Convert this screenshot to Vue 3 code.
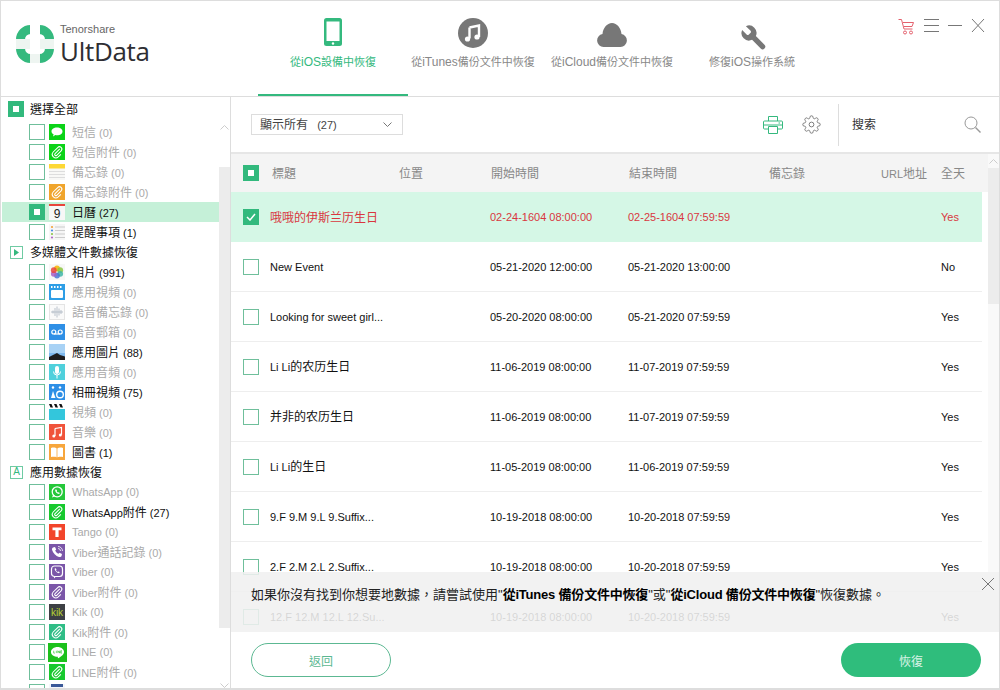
<script setup>
import { h } from 'vue'

// Latin and CJK parts of a label have different sizes in the original, so CJK runs get their own span
const Mixed = (props) =>
  h(
    'span',
    props.text
      .split(/([\u3000-\u9fff]+)/)
      .filter(Boolean)
      .map((part) => (/[\u3000-\u9fff]/.test(part) ? h('span', { class: 'cjk' }, part) : part)),
  )
Mixed.props = ['text']

// Paperclip drawn on a coloured tile, shared by all the "attachment" types
const clip = (bg) => ({
  bg,
  svg: '<path d="M11.6 4.8 6.2 10.2a1.3 1.3 0 0 0 1.9 1.9l5-5a2.7 2.7 0 0 0-3.9-3.8L4.1 8.4a4 4 0 0 0 5.7 5.6l3-3" fill="none" stroke="#fff" stroke-width="1.2" transform="translate(8 8) scale(.88) translate(-8.4 -8.4)"/>',
})

const icons = {
  msg: { bg: '#0bd318', svg: '<path d="M8 3.5c3.2 0 5.5 1.7 5.5 3.9S11.2 11.3 8 11.3c-.6 0-1.100 0-1.600-.2L4 12.600l.6-2.300C3.300 9.600 2.500 8.600 2.500 7.400 2.500 5.200 4.800 3.500 8 3.500z" fill="#fff"/>' },
  msgClip: clip('#0bd318'),
  notes: { bg: '#f8f8f6', svg: '<rect width="16" height="4.500" fill="#fdd835"/><path d="M0 7.500h16M0 10.500h16M0 13.500h16" stroke="#ddd"/>' },
  notesClip: clip('#f0a52c'),
  cal: { bg: '#f7f7f7', svg: '<rect width="16" height="2" fill="#e8453c"/><text x="8" y="14" font-size="12" text-anchor="middle" fill="#222" font-family="Liberation Sans">9</text>' },
  remind: { bg: '#f6f6f6', svg: '<path d="M6 3h10M6 6.500h10M6 10h10M6 13.500h10" stroke="#ccc"/><circle cx="3" cy="3" r="1.100" fill="#f2a33a"/><circle cx="3" cy="6.500" r="1.100" fill="#4a90e2"/><circle cx="3" cy="10" r="1.100" fill="#8bc34a"/><circle cx="3" cy="13.500" r="1.100" fill="#b06ac4"/>' },
  photos: { bg: '#f7f7f7', svg: '<g fill-opacity=".85"><circle cx="8" cy="4.400" r="2.900" fill="#f7b500"/><circle cx="11.200" cy="6.200" r="2.900" fill="#8cc63f"/><circle cx="11.200" cy="9.800" r="2.900" fill="#3fb6a8"/><circle cx="8" cy="11.600" r="2.900" fill="#4a77d4"/><circle cx="4.800" cy="9.800" r="2.900" fill="#a75ec4"/><circle cx="4.800" cy="6.200" r="2.900" fill="#e8453c"/></g>' },
  appVideo: { bg: '#2e9ee6', svg: '<rect x="2" y="6" width="12" height="8" rx="1" fill="#fff"/><path d="M2 3h12" stroke="#fff" stroke-width="2" stroke-dasharray="1.500 1.500"/>' },
  voice: { bg: '#fafafa', svg: '<rect x=".5" y=".5" width="15" height="15" fill="none" stroke="#e4e4e4"/><path d="M2 8h12M4 6.500v3M6 4v8M8 2.500v11M10 4.500v7M12 6v4" stroke="#a9b4c0" stroke-width=".8"/>' },
  voicemail: { bg: '#2e8fe6', svg: '<circle cx="4.800" cy="8" r="2" fill="none" stroke="#fff" stroke-width="1.200"/><circle cx="11.200" cy="8" r="2" fill="none" stroke="#fff" stroke-width="1.200"/><path d="M4.800 10h6.400" stroke="#fff" stroke-width="1.200"/>' },
  appImage: { bg: '#7db8ee', svg: '<rect width="16" height="9" fill="#a8d2f5"/><path d="M0 16v-3l5-2.500 3-1.500 3 2 5 1.500V16z" fill="#1d1d1f"/>' },
  audio: { bg: '#4fd0dc', svg: '<rect x="6" y="2" width="4" height="8" rx="2" fill="#fff"/><path d="M4.500 7.500a3.500 3.500 0 0 0 7 0M8 11v3.500" fill="none" stroke="#fff"/>' },
  album: { bg: '#2e8fe6', svg: '<circle cx="4" cy="3.500" r="1.200" fill="#fff"/><path d="M2 14l2-7 2.500 7z" fill="#fff"/><circle cx="11" cy="10.500" r="3.300" fill="none" stroke="#fff" stroke-width="1.400"/><path d="M9.500 3.500 11 2l1.500 1.500L11 5z" fill="#fff"/>' },
  video: { bg: '#33c6dc', svg: '<rect width="16" height="5" fill="#fff"/><path d="M0 0h2.500l1.500 3.500H1.500zM5 0h2.500L9 3.500H6.500zM10 0h2.500L14 3.500h-2.500z" fill="#111"/>' },
  music: { bg: '#f0533a', svg: '<path d="M6 4.500 12.500 3.500v7.300" fill="none" stroke="#fff" stroke-width="1.200"/><path d="M6 4.500v7.500" stroke="#fff" stroke-width="1.200"/><circle cx="4.800" cy="12" r="1.500" fill="#fff"/><circle cx="11.300" cy="11" r="1.500" fill="#fff"/>' },
  book: { bg: '#f7a63c', svg: '<path d="M2 4c2-.6 4.500-.6 5.600.4v9C6.500 12.600 4 12.600 2 13zM14 4c-2-.6-4.500-.6-5.600.4v9c1.100-.800 3.600-.800 5.600-.4z" fill="#fff"/>' },
  whatsapp: { bg: '#25c83a', svg: '<circle cx="8.200" cy="7.800" r="5" fill="none" stroke="#fff" stroke-width="1.300"/><path d="M3 13.500l1.200-3 2 1.800z" fill="#fff"/><path d="M6.300 5.500c-.6 2 1.700 4.600 3.900 4.400l.6-1-1.200-.7-.5.400c-.6-.2-1.200-.9-1.400-1.500l.4-.5-.7-1.200z" fill="#fff"/>' },
  waClip: clip('#17c92e'),
  tango: { bg: '#f2452b', svg: '<path d="M3.500 3.500h9v2.800H9.600V13H6.400V6.300H3.500z" fill="#fff"/>' },
  viberCall: { bg: '#7b56a8', svg: '<path d="M4 3.500 6 3l1.200 2.500-1 1c.6 1.500 1.800 2.700 3.300 3.300l1-1L13 10l-.5 2c-.3.800-1.500 1.200-2.500.9C6.800 12 4 9.200 3.100 6 2.800 5 3.200 3.800 4 3.500z" fill="#fff"/><path d="M9 2.500a4.500 4.500 0 0 1 4.500 4.500M9 4.500A2.500 2.500 0 0 1 11.500 7" fill="none" stroke="#fff" stroke-width=".8"/>' },
  viber: { bg: '#7b56a8', svg: '<rect x="2.500" y="2" width="11" height="10.500" rx="3" fill="none" stroke="#fff" stroke-width="1.200"/><path d="M5 12v2.500l2.500-2.500z" fill="#fff"/><path d="M5.800 4.500l1-.2.700 1.300-.5.600c.3.800.9 1.400 1.700 1.700l.6-.5 1.300.7-.2 1c-1.200.8-5.400-2.700-4.600-4.600z" fill="#fff"/>' },
  viberClip: clip('#7b56a8'),
  kik: { bg: '#3d4045', svg: '<text x="8" y="11.500" font-size="10" text-anchor="middle" fill="#b5d334" font-family="Liberation Sans">kik</text>' },
  kikClip: clip('#2fbd86'),
  line: { bg: '#1cc11c', big: true, svg: '<path d="M8 3.300c3 0 5.500 1.900 5.500 4.200 0 2.400-3.200 4.300-5.200 5.400v-1.300C5 11.600 2.500 9.800 2.500 7.500 2.500 5.200 5 3.300 8 3.300z" fill="#fff"/><path d="M4.800 6.500v2h1M7 6.500v2M8.300 8.500v-2l1.400 2v-2M11.800 6.500h-1.100v2h1.100M10.700 7.500h1" fill="none" stroke="#1cc11c" stroke-width=".5"/>' },
  lineClip: clip('#17c92e'),
  fb: { bg: '#f4f6fb', svg: '<rect x="2" y="0" width="12" height="3" fill="#3b5998"/>' },
}

// Tree on the left. `section` rows carry a mark instead of a checkbox
const tree = [
  { label: '短信', count: 0, icon: 'msg' },
  { label: '短信附件', count: 0, icon: 'msgClip' },
  { label: '備忘錄', count: 0, icon: 'notes' },
  { label: '備忘錄附件', count: 0, icon: 'notesClip' },
  { label: '日曆', count: 27, icon: 'cal', active: true },
  { label: '提醒事項', count: 1, icon: 'remind' },
  { label: '多媒體文件數據恢復', section: 'play' },
  { label: '相片', count: 991, icon: 'photos' },
  { label: '應用視頻', count: 0, icon: 'appVideo' },
  { label: '語音備忘錄', count: 0, icon: 'voice' },
  { label: '語音郵箱', count: 0, icon: 'voicemail' },
  { label: '應用圖片', count: 88, icon: 'appImage' },
  { label: '應用音頻', count: 0, icon: 'audio' },
  { label: '相冊視頻', count: 75, icon: 'album' },
  { label: '視頻', count: 0, icon: 'video' },
  { label: '音樂', count: 0, icon: 'music' },
  { label: '圖書', count: 1, icon: 'book' },
  { label: '應用數據恢復', section: 'A' },
  { label: 'WhatsApp', count: 0, icon: 'whatsapp' },
  { label: 'WhatsApp附件', count: 27, icon: 'waClip' },
  { label: 'Tango', count: 0, icon: 'tango' },
  { label: 'Viber通話記錄', count: 0, icon: 'viberCall' },
  { label: 'Viber', count: 0, icon: 'viber' },
  { label: 'Viber附件', count: 0, icon: 'viberClip' },
  { label: 'Kik', count: 0, icon: 'kik' },
  { label: 'Kik附件', count: 0, icon: 'kikClip' },
  { label: 'LINE', count: 0, icon: 'line' },
  { label: 'LINE附件', count: 0, icon: 'lineClip' },
  { label: 'Facebook', count: 1, icon: 'fb' },
]

const columns = ['標題', '位置', '開始時間', '結束時間', '備忘錄', 'URL地址', '全天']

const events = [
  { title: '哦哦的伊斯兰历生日', start: '02-24-1604 08:00:00', end: '02-25-1604 07:59:59', allDay: 'Yes', selected: true },
  { title: 'New Event', start: '05-21-2020 12:00:00', end: '05-21-2020 13:00:00', allDay: 'No' },
  { title: 'Looking for sweet girl...', start: '05-20-2020 08:00:00', end: '05-21-2020 07:59:59', allDay: 'Yes' },
  { title: 'Li Li的农历生日', start: '11-06-2019 08:00:00', end: '11-07-2019 07:59:59', allDay: 'Yes' },
  { title: '并非的农历生日', start: '11-06-2019 08:00:00', end: '11-07-2019 07:59:59', allDay: 'Yes' },
  { title: 'Li Li的生日', start: '11-05-2019 08:00:00', end: '11-06-2019 07:59:59', allDay: 'Yes' },
  { title: '9.F 9.M 9.L 9.Suffix...', start: '10-19-2018 08:00:00', end: '10-20-2018 07:59:59', allDay: 'Yes' },
  { title: '2.F 2.M 2.L 2.Suffix...', start: '10-19-2018 08:00:00', end: '10-20-2018 07:59:59', allDay: 'Yes' },
  { title: '12.F 12.M 12.L 12.Su...', start: '10-19-2018 08:00:00', end: '10-20-2018 07:59:59', allDay: 'Yes' },
]
</script>

<template>
  <div class="app">
    <header class="header">
      <div class="brand">
        <svg class="logo" viewBox="0 0 38 38">
          <rect x="4.500" y="4.500" width="29" height="29" rx="10" fill="none" stroke="#34b97e" stroke-width="9" />
          <rect x="14" y="0" width="10" height="38" fill="#fff" />
          <rect x="0" y="14" width="38" height="10" fill="#eef5f1" />
          <rect x="14" y="14" width="10" height="10" fill="#fff" />
          <rect x="14" y="29" width="10" height="9" fill="#eef5f1" />
        </svg>
        <div class="brand-text">
          <div class="company">Tenorshare</div>
          <div class="product">UltData</div>
        </div>
      </div>
      <nav class="tabs">
        <div class="tab active">
          <svg class="tab-icon" viewBox="0 0 30 30">
            <rect x="6" y="0" width="18" height="28" rx="2.500" fill="#34b97e" />
            <rect x="8.500" y="3.500" width="13" height="19.500" fill="#fff" />
            <circle cx="15" cy="25.500" r="1.200" fill="#fff" />
          </svg>
          <span class="tab-label"><Mixed text="從iOS設備中恢復" /></span>
        </div>
        <div class="tab">
          <svg class="tab-icon" viewBox="0 0 30 30">
            <circle cx="15" cy="15" r="15" fill="#777" />
            <path d="M11.500 9.500 21 7.500v11.500M11.500 9.500v11" fill="none" stroke="#fff" stroke-width="2.400" />
            <circle cx="9.500" cy="21" r="2.600" fill="#fff" />
            <circle cx="19" cy="19" r="2.600" fill="#fff" />
          </svg>
          <span class="tab-label"><Mixed text="從iTunes備份文件中恢復" /></span>
        </div>
        <div class="tab">
          <svg class="tab-icon" viewBox="0 0 30 30">
            <path d="M6.500 29a6.500 6.500 0 0 1-1-12.900C6 10 10 5 15 5s9 5 9.500 11.100A6.500 6.500 0 0 1 23.500 29z" fill="#777" />
          </svg>
          <span class="tab-label"><Mixed text="從iCloud備份文件中恢復" /></span>
        </div>
        <div class="tab">
          <svg class="tab-icon wrench" viewBox="-1.600 -4 24 24">
            <path transform="translate(24 0) scale(-1 1)" d="M14.700 6.300a1 1 0 0 0 0 1.400l1.600 1.600a1 1 0 0 0 1.400 0l3.770-3.770a6 6 0 0 1-7.940 7.940l-6.910 6.910a2.120 2.120 0 0 1-3-3l6.910-6.910a6 6 0 0 1 7.940-7.940l-3.760 3.760z" fill="#777" />
          </svg>
          <span class="tab-label"><Mixed text="修復iOS操作系統" /></span>
        </div>
      </nav>
      <div class="win-controls">
        <svg width="17" height="17" viewBox="0 0 17 17" fill="none" stroke="#e4606d">
          <path d="M.5 1.500h3l2.500 9.500h8.500M5 4.500h10.500l-1.500 4H6" />
          <circle cx="7" cy="14.500" r="1.500" />
          <circle cx="13" cy="14.500" r="1.500" />
        </svg>
        <svg width="15" height="15" viewBox="0 0 15 15" stroke="#777">
          <path d="M0 1.500h15M0 7.500h15M0 13.500h15" />
        </svg>
        <svg width="14" height="15" viewBox="0 0 14 15" stroke="#777">
          <path d="M0 7.500h14" />
        </svg>
        <svg width="14" height="15" viewBox="0 0 14 15" stroke="#777">
          <path d="M1 1l12 13M13 1 1 14" />
        </svg>
      </div>
    </header>

    <div class="content">
      <aside class="sidebar">
        <div class="tree">
          <div class="tree-all">
            <span class="check check-on"></span>
            <Mixed text="選擇全部" />
          </div>
          <template v-for="item in tree" :key="item.label">
            <div v-if="item.section" class="tree-section">
              <span class="section-mark">
                <svg v-if="item.section === 'play'" width="5" height="7" viewBox="0 0 5 7">
                  <path d="M0 0l5 3.500L0 7z" fill="#34b97e" />
                </svg>
                <template v-else>{{ item.section }}</template>
              </span>
              <Mixed :text="item.label" />
            </div>
            <div v-else class="tree-item" :class="{ active: item.active, empty: item.count === 0 }">
              <span class="check" :class="{ 'check-on': item.active }"></span>
              <span class="tile-box">
                <svg
                  class="tile"
                  :class="{ big: icons[item.icon].big }"
                  viewBox="0 0 16 16"
                  :style="{ background: icons[item.icon].bg }"
                  v-html="icons[item.icon].svg"
                ></svg>
              </span>
              <span class="tree-label"><Mixed :text="item.label" /> ({{ item.count }})</span>
            </div>
          </template>
        </div>
        <div class="scrollbar side-scroll">
          <svg class="arrow" width="9" height="5" viewBox="0 0 9 5"><path d="M.5 4.500l4-4 4 4" /></svg>
          <div class="thumb"></div>
          <svg class="arrow" width="9" height="5" viewBox="0 0 9 5"><path d="M.5.5l4 4 4-4" /></svg>
        </div>
      </aside>

      <main class="main">
        <div class="toolbar">
          <div class="filter">
            <Mixed text="顯示所有&nbsp;&nbsp;&nbsp;(27)" />
            <svg width="9" height="5" viewBox="0 0 9 5" fill="none" stroke="#777"><path d="M.5.5l4 4 4-4" /></svg>
          </div>
          <div class="tools">
            <svg width="20" height="18" viewBox="0 0 20 18" fill="none" stroke="#34b97e">
              <path d="M5.500 5V.5h9V5M5.500 13H1.500A1 1 0 0 1 .5 12V6a1 1 0 0 1 1-1h17a1 1 0 0 1 1 1v6a1 1 0 0 1-1 1h-4M5.500 10.500h9v7h-9zM.5 9h19" />
              <path d="M15.500 7h1.500" />
            </svg>
            <svg class="gear" width="19" height="19" viewBox="0 0 24 24" fill="none" stroke="#777" stroke-width="1.200">
              <path d="M12 15a3 3 0 1 0 0-6 3 3 0 0 0 0 6z" />
              <path d="M19.400 15a1.650 1.650 0 0 0 .33 1.820l.06.06a2 2 0 0 1 0 2.830 2 2 0 0 1-2.830 0l-.06-.06a1.650 1.650 0 0 0-1.820-.33 1.650 1.650 0 0 0-1 1.510V21a2 2 0 0 1-2 2 2 2 0 0 1-2-2v-.09A1.650 1.650 0 0 0 9 19.400a1.650 1.650 0 0 0-1.820.33l-.06.06a2 2 0 0 1-2.830 0 2 2 0 0 1 0-2.830l.06-.06a1.650 1.650 0 0 0 .33-1.820 1.650 1.650 0 0 0-1.510-1H3a2 2 0 0 1-2-2 2 2 0 0 1 2-2h.09A1.650 1.650 0 0 0 4.600 9a1.650 1.650 0 0 0-.33-1.820l-.06-.06a2 2 0 0 1 0-2.830 2 2 0 0 1 2.830 0l.06.06a1.650 1.650 0 0 0 1.820.33H9a1.650 1.650 0 0 0 1-1.510V3a2 2 0 0 1 2-2 2 2 0 0 1 2 2v.09a1.650 1.650 0 0 0 1 1.510 1.650 1.650 0 0 0 1.820-.33l.06-.06a2 2 0 0 1 2.830 0 2 2 0 0 1 0 2.830l-.06.06a1.650 1.650 0 0 0-.33 1.820V9a1.650 1.650 0 0 0 1.510 1H21a2 2 0 0 1 2 2 2 2 0 0 1-2 2h-.09a1.650 1.650 0 0 0-1.510 1z" />
            </svg>
          </div>
          <div class="search">
            <Mixed text="搜索" />
            <svg width="17" height="17" viewBox="0 0 17 17" fill="none" stroke="#999">
              <circle cx="7" cy="7" r="6" />
              <path d="M11.500 11.500l5 5" stroke-width="1.400" />
            </svg>
          </div>
        </div>

        <div class="table-area">
          <div class="table">
            <div class="table-head">
              <div class="head-check"><span class="check check-on"></span></div>
              <div v-for="col in columns" :key="col"><Mixed :text="col" /></div>
            </div>
            <div class="rows">
              <div v-for="row in events" :key="row.title" class="row" :class="{ selected: row.selected }">
                <div class="row-check">
                  <span class="check" :class="{ 'check-done': row.selected }">
                    <svg v-if="row.selected" width="10" height="8" viewBox="0 0 10 8" fill="none" stroke="#fff" stroke-width="1.500">
                      <path d="M1 4l3 3 5-6" />
                    </svg>
                  </span>
                </div>
                <div><Mixed :text="row.title" /></div>
                <div>{{ row.start }}</div>
                <div>{{ row.end }}</div>
                <div>{{ row.allDay }}</div>
              </div>
            </div>
          </div>
          <div class="scrollbar table-scroll">
            <svg class="arrow" width="9" height="5" viewBox="0 0 9 5"><path d="M.5 4.500l4-4 4 4" /></svg>
            <div class="thumb"></div>
          </div>

          <div class="notice">
            <p>如果你沒有找到你想要地數據，請嘗試使用"<b>從iTunes 備份文件中恢復</b>"或"<b>從iCloud 備份文件中恢復</b>"恢復數據。</p>
            <svg class="notice-close" width="14" height="14" viewBox="0 0 14 14" stroke="#777">
              <path d="M1 1l12 12M13 1 1 13" />
            </svg>
          </div>
        </div>

        <footer class="footer">
          <button type="button" class="btn btn-back">返回</button>
          <button type="button" class="btn btn-recover">恢復</button>
        </footer>
      </main>
    </div>
  </div>
</template>

<style scoped>
.app {
  box-sizing: border-box;
  width: 1000px;
  height: 690px;
  display: flex;
  flex-direction: column;
  overflow: hidden;
  background: #fff;
  border: 1px solid #ddd;
  border-bottom-width: 2px;
  font-family: "Liberation Sans", "Noto Sans CJK TC", sans-serif;
  font-size: 11px;
  color: #111;
}

.app :deep(.cjk) {
  font-family: "Noto Sans CJK TC", sans-serif;
  font-size: 12px;
  line-height: 1;
}

.header {
  flex: none;
  height: 96px;
  box-sizing: border-box;
  display: flex;
  border-bottom: 1px solid #ddd;
}

.brand {
  width: 257px;
  display: flex;
  align-items: flex-start;
  gap: 6px;
  padding: 24px 0 0 15px;
  box-sizing: border-box;
}

.logo {
  width: 38px;
  height: 38px;
  flex: none;
}

.brand-text {
  margin-top: -2px;
}

.company {
  font-size: 11px;
  line-height: 13px;
  color: #666;
}

.product {
  font-family: "Open Sans", sans-serif;
  font-size: 26px;
  line-height: 30px;
  letter-spacing: -0.3px;
  color: #2e2e33;
}

.tabs {
  display: grid;
  grid-template-columns: 150px 130px 148px 132px;
}

.tab {
  display: flex;
  flex-direction: column;
  align-items: center;
  padding-top: 17px;
  box-sizing: border-box;
  color: #888;
  font-size: 12px;
  white-space: nowrap;
}

.tab :deep(.cjk) {
  font-size: 11px;
}

.tab-label {
  margin-top: 6px;
  line-height: 16px;
}

.tab-icon {
  width: 30px;
  height: 30px;
}

.wrench {
  overflow: visible;
}

.tab.active {
  color: #34b97e;
  border-bottom: 2px solid #34b97e;
}

.win-controls {
  margin-left: auto;
  display: flex;
  gap: 9px;
  align-items: flex-start;
  padding: 17px 14px 0 0;
}

.content {
  flex: 1;
  min-height: 0;
  display: flex;
}

.sidebar {
  flex: none;
  width: 230px;
  box-sizing: border-box;
  display: flex;
  border-right: 1px solid #ddd;
  overflow: hidden;
}

.tree {
  width: 218px;
  flex: none;
  overflow: hidden;
  padding-left: 1px;
  box-sizing: border-box;
}

.tree-all {
  height: 20px;
  margin: 2px 0 3px;
  display: flex;
  align-items: center;
  gap: 6px;
  padding-left: 6px;
}

.tree-section {
  height: 20px;
  display: flex;
  align-items: center;
  gap: 7px;
  padding-left: 8px;
}

.section-mark {
  width: 13px;
  height: 13px;
  box-sizing: border-box;
  display: flex;
  align-items: center;
  justify-content: center;
  border: 1px solid #6fcba3;
  color: #34b97e;
  font-size: 10px;
  line-height: 1;
}

.tree-item {
  height: 20px;
  display: flex;
  align-items: center;
  padding-left: 27px;
  white-space: nowrap;
}

.tree-item.active {
  background: #c5f0d8;
}

.tree-item.empty {
  color: #aaa;
}

.tile-box {
  width: 16px;
  height: 16px;
  margin: 0 7px 0 4px;
  display: flex;
  align-items: center;
  justify-content: center;
  flex: none;
}

.tile {
  width: 16px;
  height: 16px;
  flex: none;
}

.tile.big {
  width: 19px;
  height: 19px;
}

.check {
  width: 16px;
  height: 16px;
  box-sizing: border-box;
  display: inline-flex;
  align-items: center;
  justify-content: center;
  flex: none;
  border: 1px solid #6fbf9b;
  background: #fff;
}

.check-on,
.check-done {
  background: #32b97d;
  border-color: #32b97d;
}

.check-on::after {
  content: "";
  width: 6px;
  height: 6px;
  background: #fff;
}

.scrollbar {
  display: flex;
  flex-direction: column;
  align-items: center;
  flex: none;
}

.arrow {
  fill: none;
  stroke: #ccc;
  flex: none;
}

.thumb {
  align-self: stretch;
}

.side-scroll {
  width: 11px;
  padding-top: 28px;
}

.side-scroll .thumb {
  margin: 37px 0 55px;
  flex: 1;
  background: #ececec;
}

.main {
  flex: 1;
  min-width: 0;
  display: flex;
  flex-direction: column;
}

.toolbar {
  flex: none;
  height: 57px;
  box-sizing: border-box;
  display: flex;
  align-items: center;
  padding-left: 20px;
  border-bottom: 2px solid #e6e6e6;
}

.filter {
  width: 152px;
  height: 21px;
  box-sizing: border-box;
  display: flex;
  align-items: center;
  justify-content: space-between;
  padding: 0 10px 0 8px;
  border: 1px solid #ddd;
  color: #444;
}

.tools {
  margin-left: auto;
  display: flex;
  align-items: center;
  gap: 19px;
  padding-right: 17px;
}

.search {
  width: 161px;
  height: 42px;
  box-sizing: border-box;
  display: flex;
  align-items: center;
  justify-content: space-between;
  padding: 0 18px 0 13px;
  border-left: 1px solid #ddd;
  color: #333;
}

.table-area {
  flex: 1;
  min-height: 0;
  display: flex;
  position: relative;
  overflow: hidden;
}

.table {
  width: 757px;
  flex: none;
  display: flex;
  flex-direction: column;
}

.table-head {
  flex: none;
  height: 38px;
  display: grid;
  grid-template-columns: 41px 127px 92px 138px 140px 112px 60px 1fr;
  align-items: center;
  background: #f4f4f4;
  color: #888;
}

.head-check,
.row-check {
  padding-left: 12px;
  display: flex;
}

.rows {
  margin-right: 6px;
  flex: 1;
  min-height: 0;
  overflow: hidden;
}

.row {
  height: 50px;
  box-sizing: border-box;
  display: grid;
  grid-template-columns: 39px 220px 138px 313px 1fr;
  align-items: center;
  border-bottom: 1px solid #eee;
  white-space: nowrap;
}

.row.selected {
  background: #d5f7e6;
  color: #d9363e;
  border-bottom: 0;
}

.table-scroll {
  width: 11px;
  background: #f9f9f9;
  padding-top: 5px;
}

.table-scroll .thumb {
  margin-top: 4px;
  height: 136px;
  background: #ececec;
}

.notice {
  position: absolute;
  left: 0;
  right: 0;
  bottom: 0;
  height: 60px;
  box-sizing: border-box;
  padding: 14px 0 0 20px;
  background: rgba(240, 240, 240, 0.88);
  font-size: 13px;
  color: #222;
}

.notice p {
  margin: 0;
  line-height: 18px;
}

.notice b {
  color: #000;
  letter-spacing: -0.2px;
}

.notice-close {
  position: absolute;
  top: 5px;
  right: 4px;
}

.footer {
  flex: none;
  height: 56px;
  display: flex;
  align-items: center;
  justify-content: space-between;
  padding: 0 18px 0 20px;
  box-sizing: border-box;
}

.btn {
  width: 140px;
  height: 34px;
  border-radius: 17px;
  font-family: "Noto Sans CJK TC", sans-serif;
  font-size: 12px;
  cursor: pointer;
}

.btn-back {
  background: #fff;
  border: 1px solid #5cb892;
  color: #5cb892;
}

.btn-recover {
  background: #2fbd7c;
  border: 0;
  color: #d8f3e6;
}
</style>
